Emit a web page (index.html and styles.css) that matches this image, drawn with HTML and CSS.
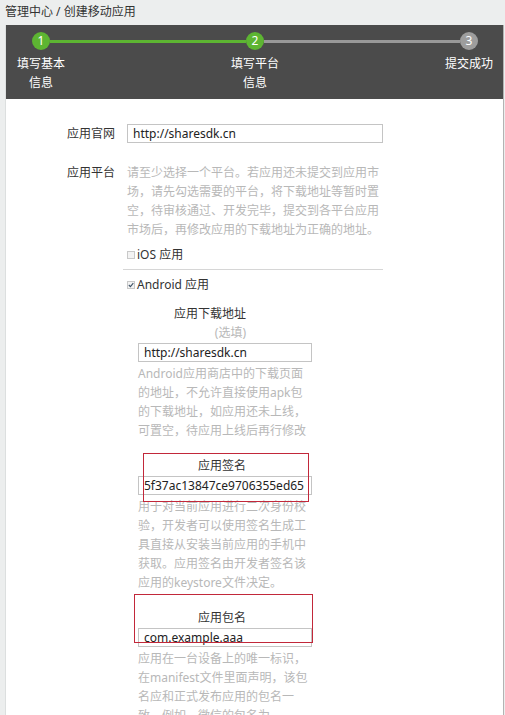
FILE: index.html
```html
<!DOCTYPE html>
<html lang="zh-CN">
<head>
<meta charset="utf-8">
<title>创建移动应用</title>
<link rel="stylesheet" href="styles.css">
</head>
<body>
<div class="crumb">管理中心 / 创建移动应用</div>
<div class="panel">
  <div class="steps">
    <div class="track">
      <span class="dot">1</span>
      <span class="seg"></span>
      <span class="dot">2</span>
      <span class="seg todo"></span>
      <span class="dot todo">3</span>
    </div>
    <div class="step-labels">
      <span>填写基本信息</span>
      <span>填写平台信息</span>
      <span>提交成功</span>
    </div>
  </div>

  <div class="form">
    <div class="row">
      <div class="row-label">应用官网</div>
      <input class="text-input" type="text" value="http://sharesdk.cn">
    </div>

    <div class="row">
      <div class="row-label">应用平台</div>
      <div class="platforms">
        <p class="desc">请至少选择一个平台。若应用还未提交到应用市场，请先勾选需要的平台，将下载地址等暂时置空，待审核通过、开发完毕，提交到各平台应用市场后，再修改应用的下载地址为正确的地址。</p>
        <div class="check"><span class="box"></span>iOS 应用</div>
        <div class="divider"></div>
        <div class="check android"><span class="box checked"><svg viewBox="0 0 6 6" width="6" height="6"><path d="M0.8 3 L2.4 4.6 L5.3 1.2" fill="none" stroke="#3e5266" stroke-width="1.1"/></svg></span>Android 应用</div>

        <div class="sub first">
          <div class="sub-label">应用下载地址</div>
          <div class="sub-label hint">(选填)</div>
          <input class="text-input" type="text" value="http://sharesdk.cn">
          <p class="desc">Android应用商店中的下载页面的地址，不允许直接使用apk包的下载地址，如应用还未上线，可置空，待应用上线后再行修改</p>
        </div>

        <div class="sub">
          <div class="sub-label">应用签名</div>
          <input class="text-input" type="text" value="5f37ac13847ce9706355ed65">
          <p class="desc">用于对当前应用进行二次身份校验，开发者可以使用签名生成工具直接从安装当前应用的手机中获取。应用签名由开发者签名该应用的keystore文件决定。</p>
          <span class="mark mark-sign"></span>
        </div>

        <div class="sub">
          <div class="sub-label">应用包名</div>
          <input class="text-input" type="text" value="com.example.aaa">
          <p class="desc">应用在一台设备上的唯一标识，在manifest文件里面声明，该包名应和正式发布应用的包名一致，例如，微信的包名为com.tencent.mm</p>
          <span class="mark mark-pkg"></span>
        </div>
      </div>
    </div>
  </div>
</div>
</body>
</html>
```

FILE: styles.css
```css
* { box-sizing: border-box; }

body {
  margin: 0;
  background: #eceeee;
  font-family: "Noto Sans", "Noto Sans CJK SC", sans-serif;
  font-size: 12px;
  line-height: 19px;
  color: #333;
}

p { margin: 0; }

.crumb {
  height: 25px;
  line-height: 24px;
  padding-left: 5px;
  color: #333;
}

.panel {
  margin-left: 5px;
  width: 499px;
  min-height: 690px;
  background: #fff;
  border-left: 1px solid #dcdfdf;
  border-right: 1px solid #b3b3b3;
}

/* ---------- steps ---------- */
.steps {
  background: #4b4b4b;
  padding: 7px 0 7px;
}

.track {
  display: flex;
  align-items: center;
  padding: 0 25px 0 26px;
}

.dot {
  flex: none;
  width: 18px;
  height: 18px;
  border-radius: 50%;
  background: #5db532;
  color: #fff;
  text-align: center;
  line-height: 18px;
  font-size: 12px;
}

.dot.todo { background: #9d9d9d; }

.seg {
  flex: 1;
  height: 3px;
  background: #5db532;
}

.seg.todo { background: #999; }

.step-labels {
  display: flex;
  justify-content: space-between;
  padding: 0 9px 0 10px;
  margin-top: 4px;
  color: #fff;
}

.step-labels span {
  width: 50px;
  text-align: center;
}

/* ---------- form ---------- */
.form {
  padding: 25px 0 30px;
}

.row {
  display: grid;
  grid-template-columns: 109px 256px;
  column-gap: 12px;
  align-items: start;
}

.row + .row { margin-top: 20px; }

.row-label {
  text-align: right;
  color: #333;
}

.text-input {
  display: block;
  width: 100%;
  height: 19px;
  margin: 0;
  padding: 0 5px;
  border: 1px solid #c4c4c4;
  border-radius: 0;
  background: #fff;
  font-family: "Noto Sans", "Noto Sans CJK SC", sans-serif;
  font-size: 12px;
  line-height: 17px;
  color: #222;
  outline: none;
}

.desc { color: #b8b8b8; }

.check {
  display: flex;
  align-items: center;
  margin-top: 6px;
  color: #333;
}

.check.android { margin-top: 5px; }

.box {
  flex: none;
  display: flex;
  align-items: center;
  justify-content: center;
  width: 8px;
  height: 8px;
  margin-right: 2px;
  border: 1px solid #c9c9c9;
  background: #f3f3f3;
}

.box svg { display: block; }

.divider {
  height: 1px;
  margin: 5px 0 0 -4px;
  background: #d6d6d6;
}

.sub {
  position: relative;
  width: 174px;
  margin-left: 11px;
  margin-top: 16px;
}

.sub.first { margin-top: 10px; }

.sub-label {
  width: 108px;
  text-align: right;
  color: #333;
}

.sub-label.hint { color: #b8b8b8; }

.sub .text-input { margin-top: 1px; }

.sub .desc { margin-top: 2px; }

.mark {
  position: absolute;
  border: 1px solid #c2283a;
  pointer-events: none;
}

.mark-sign {
  left: 5px;
  top: -3px;
  width: 166px;
  height: 49px;
}

.mark-pkg {
  left: -4px;
  top: -14px;
  width: 179px;
  height: 49px;
}
```
